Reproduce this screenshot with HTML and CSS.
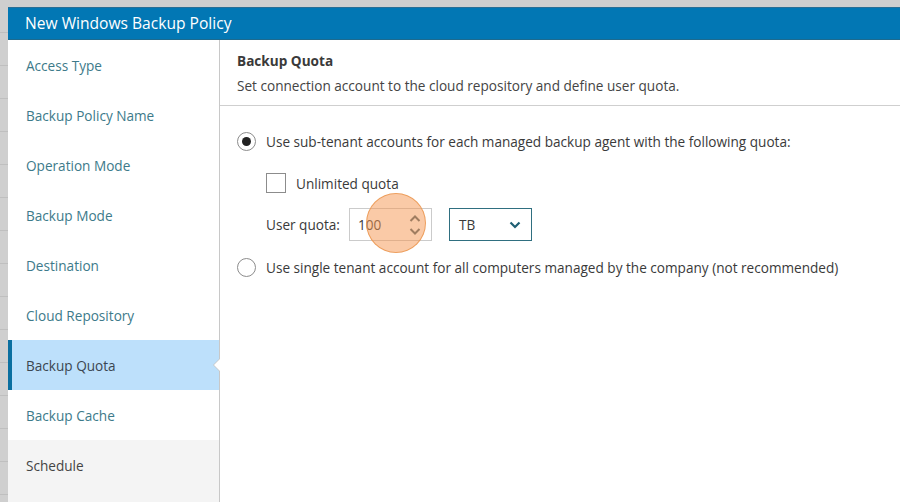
FILE: index.html
```html
<!DOCTYPE html>
<html>
<head>
<meta charset="utf-8">
<link rel="stylesheet" href="styles.css">
</head>
<body>
<div class="page">
  <div class="dialog">
    <div class="titlebar">New Windows Backup Policy</div>
    <div class="body">
      <nav class="steps">
        <div class="step">Access Type</div>
        <div class="step">Backup Policy Name</div>
        <div class="step">Operation Mode</div>
        <div class="step">Backup Mode</div>
        <div class="step">Destination</div>
        <div class="step">Cloud Repository</div>
        <div class="step active">Backup Quota<span class="notch"></span></div>
        <div class="step">Backup Cache</div>
        <div class="step future">Schedule</div>
      </nav>
      <main class="content">
        <header class="head">
          <div class="head-title">Backup Quota</div>
          <div class="head-desc">Set connection account to the cloud repository and define user quota.</div>
        </header>
        <div class="form">
          <div class="row radio-row">
            <span class="radio checked"></span>
            <span>Use sub-tenant accounts for each managed backup agent with the following quota:</span>
          </div>
          <div class="row check-row">
            <span class="checkbox"></span>
            <span>Unlimited quota</span>
          </div>
          <div class="row quota-row">
            <span class="quota-label">User quota:</span>
            <div class="numbox">
              <span>100</span>
              <svg class="spin" width="12" height="24" viewBox="0 0 12 24">
                <path d="M1.5 8 L6 3.5 L10.5 8" fill="none" stroke="#4a6470" stroke-width="2"/>
                <path d="M1.5 16 L6 20.5 L10.5 16" fill="none" stroke="#4a6470" stroke-width="2"/>
              </svg>
              <span class="click"></span>
            </div>
            <div class="select">
              <span>TB</span>
              <svg width="12" height="8" viewBox="0 0 12 8">
                <path d="M1.5 1.5 L6 6 L10.5 1.5" fill="none" stroke="#1f5f73" stroke-width="2.2"/>
              </svg>
            </div>
          </div>
          <div class="row radio-row second">
            <span class="radio"></span>
            <span>Use single tenant account for all computers managed by the company (not recommended)</span>
          </div>
        </div>
      </main>
    </div>
  </div>
</div>
</body>
</html>
```
FILE: styles.css
```css
html, body {
  margin: 0;
  padding: 0;
}
body {
  width: 900px;
  height: 502px;
  overflow: hidden;
  font-family: "Open Sans", "Noto Sans", sans-serif;
  font-size: 13.6px;
  background: #cfcfcf repeating-linear-gradient(to bottom, #cfcfcf 0, #cfcfcf 32px, #bfbfbf 32px, #bfbfbf 33px);
}
.page {
  padding: 7px 0 0 8px;
  height: 495px;
}
.dialog {
  height: 100%;
  background: #fff;
  display: flex;
  flex-direction: column;
}
.titlebar {
  background: #0277b4;
  border-top: 1px solid #2a6f95;
  border-bottom: 1px solid #1d6a8e;
  color: #fff;
  font-size: 15.6px;
  line-height: 31px;
  padding-left: 17px;
  height: 31px;
}
.body {
  flex: 1;
  display: flex;
}
.steps {
  width: 211px;
  border-right: 1px solid #c8c8c8;
  display: flex;
  flex-direction: column;
}
.step {
  height: 50px;
  line-height: 52px;
  padding-left: 18px;
  color: #3d7a8a;
  position: relative;
  box-sizing: border-box;
}
.step.active {
  background: #bde0fb;
  color: #3b4650;
  box-shadow: inset 4px 0 0 #0a6fa0;
}
.step.future {
  background: #f4f4f4;
  color: #444;
  flex: 1;
}
.notch {
  position: absolute;
  right: -1px;
  top: 18px;
  width: 0;
  height: 0;
  border-top: 7px solid transparent;
  border-bottom: 7px solid transparent;
  border-right: 7px solid #c8c8c8;
}
.notch::after {
  content: "";
  position: absolute;
  top: -7px;
  left: 1px;
  border-top: 7px solid transparent;
  border-bottom: 7px solid transparent;
  border-right: 7px solid #fff;
}
.content {
  flex: 1;
}
.head {
  padding: 11px 0 0 17px;
  height: 54px;
  border-bottom: 1px solid #cfcfcf;
}
.head-title {
  font-weight: bold;
  color: #3a3a3a;
  line-height: 20px;
}
.head-desc {
  color: #444;
  line-height: 20px;
  margin-top: 5px;
}
.form {
  padding: 24px 0 0 17px;
  color: #3a3a3a;
}
.row {
  display: flex;
  align-items: center;
}
.radio-row {
  height: 22px;
}
.radio {
  width: 17px;
  height: 17px;
  border: 1px solid #8c8c8c;
  border-radius: 50%;
  margin-right: 10px;
  position: relative;
  background: #fff;
}
.radio.checked::after {
  content: "";
  position: absolute;
  left: 4px;
  top: 4px;
  width: 9px;
  height: 9px;
  border-radius: 50%;
  background: #222;
}
.check-row {
  margin: 21px 0 0 29px;
  height: 20px;
}
.checkbox {
  width: 18px;
  height: 18px;
  border: 1px solid #8c8c8c;
  margin-right: 10px;
}
.quota-row {
  margin: 15px 0 0 29px;
  height: 33px;
}
.quota-label {
  width: 83px;
}
.numbox {
  position: relative;
  width: 83px;
  height: 33px;
  box-sizing: border-box;
  border: 1px solid #cbcbcb;
  display: flex;
  align-items: center;
  justify-content: space-between;
  padding: 0 10px 0 8px;
}
.spin {
  display: block;
}
.click {
  position: absolute;
  left: 16px;
  top: -16px;
  width: 60px;
  height: 60px;
  border-radius: 50%;
  background: rgba(245, 150, 80, 0.5);
  border: 1.5px solid rgba(235, 150, 80, 0.85);
  box-sizing: border-box;
}
.select {
  margin-left: 17px;
  width: 83px;
  height: 33px;
  border: 1px solid #2f6f80;
  display: flex;
  align-items: center;
  justify-content: space-between;
  padding: 0 10px 0 9px;
  box-sizing: border-box;
}
.second {
  margin-top: 15px;
}
```
